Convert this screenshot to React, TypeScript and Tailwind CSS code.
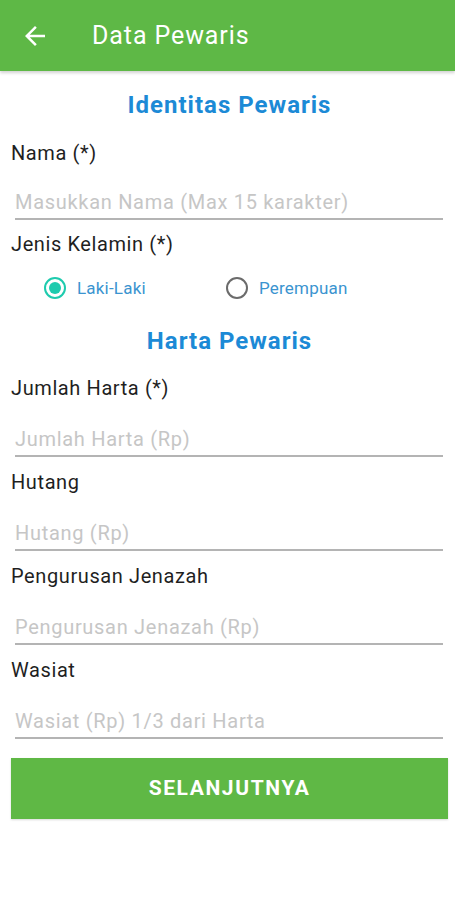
import React from "react";

const fields = [
  { label: "Jumlah Harta (*)", placeholder: "Jumlah Harta (Rp)" },
  { label: "Hutang", placeholder: "Hutang (Rp)" },
  { label: "Pengurusan Jenazah", placeholder: "Pengurusan Jenazah (Rp)" },
  { label: "Wasiat", placeholder: "Wasiat (Rp) 1/3 dari Harta" },
];

function Field({ label, placeholder }: { label: string; placeholder: string }) {
  return (
    <div className="mb-[12px]">
      <div className="h-[26px] text-[20px] leading-[26px] tracking-[0.6px] text-[#1f1f1f]">{label}</div>
      <div className="ml-[4px] mr-[5px] mt-[25px] border-b-2 border-[#b4b4b4] pb-[3px]">
        <div className="h-[26px] text-[20px] leading-[26px] tracking-[0.7px] text-[#c6c6c6]">{placeholder}</div>
      </div>
    </div>
  );
}

function Radio({ checked, label }: { checked?: boolean; label: string }) {
  return (
    <div className="flex items-center gap-[11px]">
      <span
        className={`flex h-[22px] w-[22px] items-center justify-center rounded-full border-2 ${
          checked ? "border-[#1ecbae]" : "border-[#6b6b6b]"
        }`}
      >
        {checked && <span className="h-[12px] w-[12px] rounded-full bg-[#1ecbae]" />}
      </span>
      <span className="text-[17px] leading-[24px] tracking-[0.2px] text-[#3b94d0]">{label}</span>
    </div>
  );
}

export default function App() {
  return (
    <div className="min-h-[900px] w-[455px] bg-white font-['Roboto',sans-serif]">
      <header className="relative flex h-[71px] items-center bg-[#5eb846] shadow-[0_2px_3px_rgba(0,0,0,0.18)]">
        <svg viewBox="0 0 24 24" className="ml-[20px] h-[30px] w-[30px] fill-white">
          <path d="M20 11H7.83l5.59-5.59L12 4l-8 8 8 8 1.41-1.41L7.83 13H20v-2z" />
        </svg>
        <h1 className="ml-[42px] text-[25px] tracking-[0.9px] text-white">Data Pewaris</h1>
      </header>

      <main className="pl-[11px] pr-[7px]">
        <h2 className="mt-[19px] h-[30px] text-center text-[24px] font-bold leading-[30px] tracking-[1px] text-[#1c8ad6]">
          Identitas Pewaris
        </h2>

        <div className="mt-[20px]">
          <div className="h-[26px] text-[20px] leading-[26px] tracking-[0.6px] text-[#1f1f1f]">Nama (*)</div>
          <div className="ml-[4px] mr-[5px] mt-[23px] border-b-2 border-[#b4b4b4] pb-[3px]">
            <div className="h-[26px] text-[20px] leading-[26px] tracking-[0.7px] text-[#c6c6c6]">
              Masukkan Nama (Max 15 karakter)
            </div>
          </div>
        </div>

        <div className="mt-[11px] h-[26px] text-[20px] leading-[26px] tracking-[0.6px] text-[#1f1f1f]">
          Jenis Kelamin (*)
        </div>

        <div className="mt-[19px] flex h-[24px] items-center pl-[33px]">
          <div className="w-[182px]">
            <Radio checked label="Laki-Laki" />
          </div>
          <Radio label="Perempuan" />
        </div>

        <h2 className="mt-[26px] h-[30px] text-center text-[24px] font-bold leading-[30px] tracking-[1px] text-[#1c8ad6]">
          Harta Pewaris
        </h2>

        <div className="mt-[19px]">
          {fields.map((f) => (
            <Field key={f.label} {...f} />
          ))}
        </div>

        <button className="mt-[19px] flex h-[61px] w-full items-center justify-center bg-[#5fb845] text-[21px] font-bold tracking-[1.6px] text-white shadow-[0_1px_2px_rgba(0,0,0,0.15)]">
          SELANJUTNYA
        </button>
      </main>
    </div>
  );
}
